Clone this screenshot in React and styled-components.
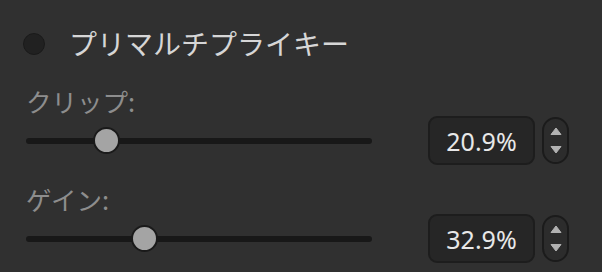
import React from 'react';
import styled, { createGlobalStyle } from 'styled-components';

const GlobalStyle = createGlobalStyle`
  html, body {
    margin: 0;
    padding: 0;
    background: #303030;
  }
  body {
    font-family: "Noto Sans", "Noto Sans CJK JP", sans-serif;
  }
`;

const Panel = styled.div`
  width: 602px;
  height: 272px;
  background: #303030;
  padding-left: 26px;
  box-sizing: border-box;
  display: flex;
  flex-direction: column;
  overflow: hidden;
`;

const Header = styled.div`
  height: 86px;
  display: flex;
  align-items: center;
  gap: 24px;
  margin-left: -3px;
`;

const Dot = styled.div`
  width: 22px;
  height: 22px;
  border-radius: 50%;
  background: #212121;
  border: 1px solid #1a1a1a;
  box-sizing: border-box;
  margin-top: 1px;
`;

const Title = styled.div`
  font-family: "Noto Sans CJK JP", sans-serif;
  font-size: 28px;
  color: #d6d6d6;
  line-height: 1;
`;

const Section = styled.div`
  display: flex;
  flex-direction: column;
  margin-top: ${(p) => (p.$first ? 0 : 19)}px;
`;

const Label = styled.div`
  height: 30px;
  line-height: 30px;
  font-family: "Noto Sans CJK JP", sans-serif;
  font-size: 25.5px;
  color: #8d8d8d;
`;

const Row = styled.div`
  height: 49px;
  display: flex;
  align-items: center;
`;

const Track = styled.div`
  position: relative;
  width: 346px;
  height: 6px;
  border-radius: 3px;
  background: #181818;
`;

const Thumb = styled.div`
  position: absolute;
  top: 50%;
  width: 27px;
  height: 27px;
  margin-top: -13.5px;
  border-radius: 50%;
  background: #a4a4a4;
  border: 2px solid #1a1a1a;
  box-sizing: border-box;
`;

const ValueBox = styled.div`
  margin-left: 56px;
  width: 107px;
  height: 49px;
  box-sizing: border-box;
  border: 2px solid #1d1d1d;
  border-radius: 9px;
  background: #262626;
  color: #e8e8e8;
  font-size: 25px;
  display: flex;
  align-items: center;
  justify-content: center;
`;

const Spinner = styled.div`
  margin-left: 7px;
  width: 27px;
  height: 47px;
  box-sizing: border-box;
  border: 2px solid #1b1b1b;
  border-radius: 14px;
  background: #2c2c2c;
  display: flex;
  flex-direction: column;
  align-items: center;
  justify-content: center;
  gap: 9px;
`;

const Arrow = ({ down }) => (
  <svg width="12" height="9" viewBox="0 0 12 9">
    <path
      d={down ? 'M1 1.5 H11 L6 8 Z' : 'M6 1 L11 7.5 H1 Z'}
      fill="#b2b2b2"
      stroke="#b2b2b2"
      strokeWidth="1"
      strokeLinejoin="round"
    />
  </svg>
);

const TRACK = 346;
const KNOB = 27;

function SliderField({ label, value, first }) {
  const left = (value / 100) * (TRACK - KNOB);
  return (
    <Section $first={first}>
      <Label>{label}</Label>
      <Row>
        <Track>
          <Thumb style={{ left: `${left}px` }} />
        </Track>
        <ValueBox>{value.toFixed(1)}%</ValueBox>
        <Spinner>
          <Arrow />
          <Arrow down />
        </Spinner>
      </Row>
    </Section>
  );
}

export default function App() {
  return (
    <>
      <GlobalStyle />
      <Panel>
        <Header>
          <Dot />
          <Title>プリマルチプライキー</Title>
        </Header>
        <SliderField label="クリップ:" value={20.9} first />
        <SliderField label="ゲイン:" value={32.9} />
      </Panel>
    </>
  );
}
